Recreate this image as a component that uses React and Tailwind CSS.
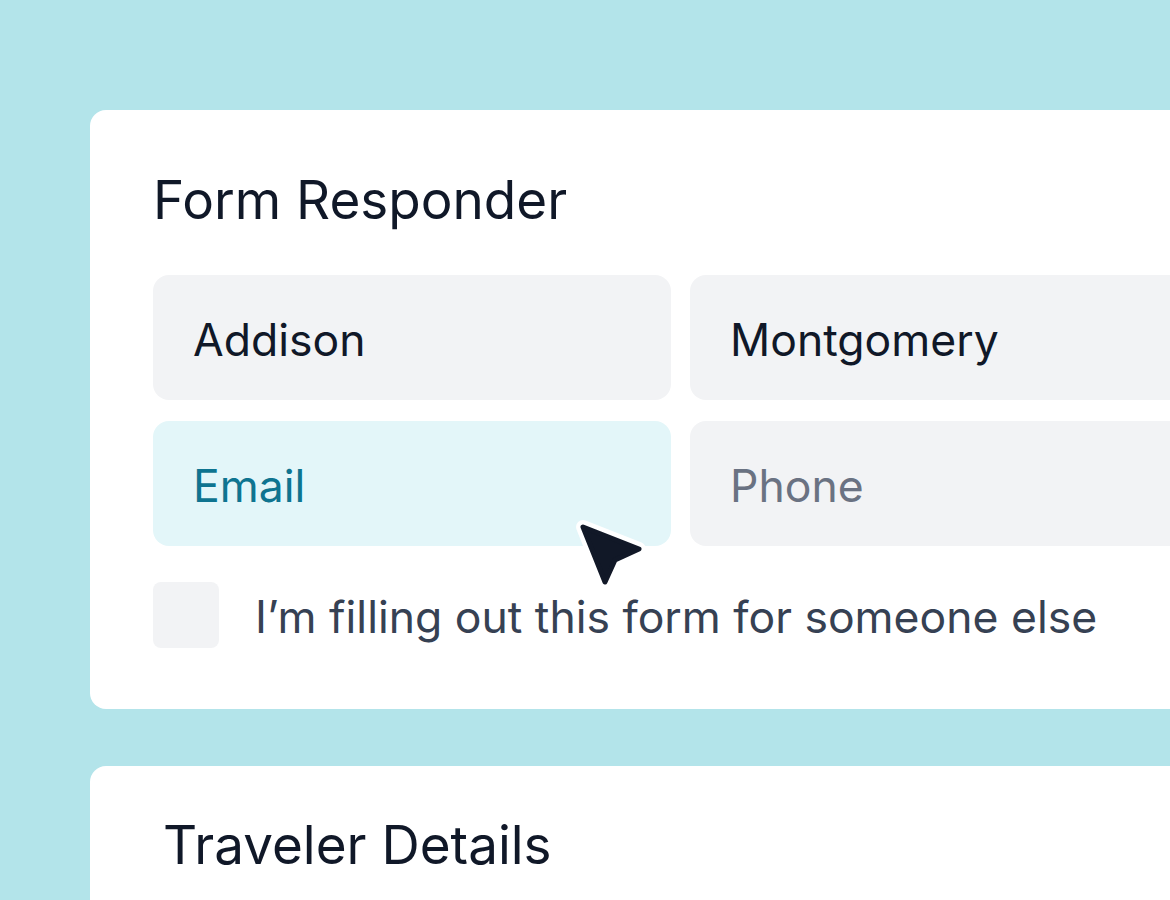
import React from "react";

const Cursor = () => (
  <svg
    className="absolute left-[480px] top-[405px]"
    width="80"
    height="80"
    viewBox="0 0 80 80"
  >
    <path
      d="M13 12 L69 34 L45 45 L35 67 Z"
      fill="#ffffff"
      stroke="#ffffff"
      strokeWidth="14"
      strokeLinejoin="round"
    />
    <path
      d="M13 12 L69 34 L45 45 L35 67 Z"
      fill="#111827"
      stroke="#111827"
      strokeWidth="5"
      strokeLinejoin="round"
    />
  </svg>
);

const Field = ({ children, className }) => (
  <div className={`h-[125px] rounded-2xl flex items-center pl-10 pt-[5px] text-[44.5px] ${className}`}>
    {children}
  </div>
);

export default function App() {
  return (
    <div
      className="w-[1170px] h-[900px] overflow-hidden bg-[#b3e4ea] pt-[110px] pl-[90px]"
      style={{ fontFamily: "Inter, 'Noto Sans', sans-serif" }}
    >
      <div className="relative w-[1200px] bg-white rounded-2xl pt-[64px] pl-[63px] pb-[61px]">
        <h1 className="text-[53px] leading-none text-gray-900">Form Responder</h1>
        <div className="grid grid-cols-[518px_518px] gap-x-[19px] gap-y-[21px] mt-[48px]">
          <Field className="bg-[#f2f3f5] text-gray-900">Addison</Field>
          <Field className="bg-[#f2f3f5] text-gray-900">Montgomery</Field>
          <Field className="bg-[#e3f6f9] text-[#0e7490]">Email</Field>
          <Field className="bg-[#f2f3f5] text-gray-500">Phone</Field>
        </div>
        <div className="flex items-center gap-9 mt-9">
          <div className="w-[66px] h-[66px] rounded-lg bg-[#f2f3f5]" />
          <span className="text-[44.5px] leading-none text-gray-700 pt-1">
            I’m filling out this form for someone else
          </span>
        </div>
        <Cursor />
      </div>
      <div className="w-[1200px] h-[200px] bg-white rounded-2xl mt-[57px] pt-[53px] pl-[73px]">
        <h2 className="text-[53px] leading-none text-gray-900">Traveler Details</h2>
      </div>
    </div>
  );
}
